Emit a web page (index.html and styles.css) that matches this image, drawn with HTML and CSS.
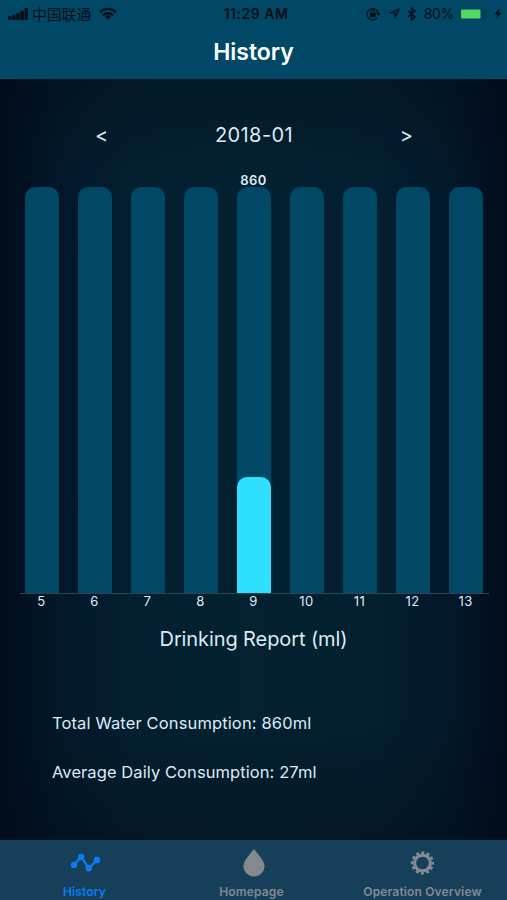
FILE: index.html
```html
<!DOCTYPE html>
<html lang="en">
<head>
    <meta charset="UTF-8">
    <meta name="viewport" content="width=device-width, initial-scale=1.0">
    <title>History</title>
    <link rel="stylesheet" href="styles.css">
</head>
<body>
    <header class="header">
        <div class="status">
            <div class="status-left">
                <svg class="signal" width="20" height="12" viewBox="0 0 20 12">
                    <rect x="0" y="8" width="3.4" height="4" rx="1"/>
                    <rect x="4.1" y="6.5" width="3.4" height="5.5" rx="1"/>
                    <rect x="8.2" y="4.8" width="3.4" height="7.2" rx="1"/>
                    <rect x="12.4" y="2.8" width="3.4" height="9.2" rx="1"/>
                    <rect x="16.5" y="0" width="3.4" height="12" rx="1"/>
                </svg>
                <span class="carrier">中国联通</span>
                <svg class="wifi" width="18" height="13" viewBox="0 0 18 13">
                    <path d="M1 5.2C5.3.8 12.7.8 17 5.2M4 8.2c2.8-2.8 7.2-2.8 10 0" fill="none" stroke="#020d16" stroke-width="2.3"/>
                    <path d="M9 12.5l-3-3.1c1.7-1.5 4.3-1.5 6 0z"/>
                </svg>
            </div>
            <span class="time">11:29 AM</span>
            <div class="status-right">
                <svg class="lock" width="15" height="14" viewBox="0 0 15 14">
                    <path d="M11.2 10.8A5.7 5.7 0 1 1 12.3 6.5" fill="none" stroke="#020d16" stroke-width="1.2"/>
                    <path d="M10 6h4.600l-2.300 3z"/>
                    <rect x="3.8" y="6" width="5.8" height="4.2" rx=".4"/>
                    <path d="M5 6.2V5a1.700 1.700 0 0 1 3.400 0v1.200" fill="none" stroke="#020d16"/>
                </svg>
                <svg class="arrow" width="11" height="11" viewBox="0 0 11 11">
                    <path d="M10 1L1 5h4.900v5z" fill="none" stroke="#020d16" stroke-width="1.2" stroke-linejoin="round"/>
                </svg>
                <svg class="bluetooth" width="9" height="14" viewBox="0 0 9 14">
                    <path d="M1 4l7 6-3.500 3V1L8 4l-7 6" fill="none" stroke="#020d16" stroke-width="1.4"/>
                </svg>
                <span class="percent">80%</span>
                <svg class="battery" width="31" height="12" viewBox="0 0 31 12">
                    <rect x=".5" y=".5" width="27" height="11" rx="2.5" fill="#01415f" stroke="#063e5e"/>
                    <rect x="2" y="1.5" width="19.5" height="9" rx="1" fill="#4cdb64"/>
                    <path d="M29 4c1.500.8 1.500 3.200 0 4z" fill="#063e5e"/>
                </svg>
                <svg class="bolt" width="8" height="11" viewBox="0 0 8 11">
                    <path d="M5.600 0L.5 6.200h2.800L2.300 11 7.700 4.500H4.700z"/>
                </svg>
            </div>
        </div>
        <h1 class="title">History</h1>
    </header>

    <main class="main">
        <div class="month">
            <span class="month-btn">&lt;</span>
            <span class="month-name">2018-01</span>
            <span class="month-btn">&gt;</span>
        </div>

        <div class="chart">
            <div class="col"><div class="bar"></div></div>
            <div class="col"><div class="bar"></div></div>
            <div class="col"><div class="bar"></div></div>
            <div class="col"><div class="bar"></div></div>
            <div class="col">
                <span class="value">860</span>
                <div class="bar"><div class="fill" style="height: 28.6%;"></div></div>
            </div>
            <div class="col"><div class="bar"></div></div>
            <div class="col"><div class="bar"></div></div>
            <div class="col"><div class="bar"></div></div>
            <div class="col"><div class="bar"></div></div>
        </div>
        <div class="axis"></div>
        <div class="days">
            <span>5</span>
            <span>6</span>
            <span>7</span>
            <span>8</span>
            <span>9</span>
            <span>10</span>
            <span>11</span>
            <span>12</span>
            <span>13</span>
        </div>

        <h2 class="report">Drinking Report (ml)</h2>

        <div class="totals">
            <p class="total">Total Water Consumption: 860ml</p>
            <p class="average">Average Daily Consumption: 27ml</p>
        </div>
    </main>

    <nav class="tabs">
        <div class="tab active">
            <svg width="32" height="30" viewBox="0 0 32 30">
                <path d="M5 17L12.200 8.700 19.800 20.500 28 12" fill="none" stroke="currentColor" stroke-width="2.2"/>
                <circle cx="5" cy="17" r="3.200"/>
                <circle cx="12.200" cy="8.900" r="3.200"/>
                <circle cx="19.800" cy="20.300" r="3.200"/>
                <circle cx="28" cy="12" r="3.200"/>
            </svg>
            <span>History</span>
        </div>
        <div class="tab home">
            <svg width="32" height="30" viewBox="0 0 32 30">
                <path d="M16 1c2.500 3.600 10.600 11 10.600 17.300a10.600 10.300 0 0 1-21.200 0C5.400 12 13.500 4.600 16 1z"/>
            </svg>
            <span>Homepage</span>
        </div>
        <div class="tab">
            <svg width="32" height="30" viewBox="0 0 32 30">
                <circle cx="15.500" cy="15" r="7.900" fill="none" stroke="currentColor" stroke-width="3.200"/>
                <circle cx="15.500" cy="15" r="10.200" fill="none" stroke="currentColor" stroke-width="2.800" stroke-dasharray="3 2.341" stroke-dashoffset="1.500"/>
            </svg>
            <span>Operation Overview</span>
        </div>
    </nav>
</body>
</html>
```
FILE: styles.css
```css
* {
    box-sizing: border-box;
}
body {
    margin: 0;
    height: 900px;
    display: flex;
    flex-direction: column;
    overflow: hidden;
    font-family: Inter, "Noto Sans CJK SC", sans-serif;
    color: #dcebf5;
    background: #021f2f;
}
svg {
    display: block;
    flex: none;
    fill: currentColor;
}
h1, h2, p {
    margin: 0;
    font-weight: 400;
}
span {
    white-space: nowrap;
}
.header {
    height: 79px;
    background: #004865;
}
.status {
    display: grid;
    grid-template-columns: 1fr auto 1fr;
    align-items: center;
    height: 27px;
    padding: 0 5px 0 8px;
    color: #020d16;
    font-size: 14px;
}
.status-left, .status-right {
    display: flex;
    align-items: center;
}
.status-right {
    justify-content: flex-end;
}
.carrier {
    margin: 0 8px 0 4px;
    font-family: "Noto Sans CJK SC", sans-serif;
    font-size: 14.8px;
    line-height: 20px;
}
.time {
    padding-left: 2px;
    font-weight: 600;
    letter-spacing: 0.5px;
}
.lock {
    margin-right: 8px;
}
.arrow {
    margin-right: 7px;
}
.bluetooth {
    margin-right: 8px;
}
.percent {
    letter-spacing: -0.3px;
}
.battery {
    margin: 0 4px 0 5px;
}
.title {
    text-align: center;
    font-size: 23px;
    line-height: 51px;
    font-weight: 600;
    color: #fff;
}
.main {
    flex: 1;
    background:
        linear-gradient(to bottom, rgba(1, 10, 24, 0.35), transparent 12%, transparent 84%, rgba(1, 10, 24, 0.4)),
        linear-gradient(to right, #010d1d, #02182a 12%, #031f30 26%, #032131 50%, #031f30 74%, #02182a 88%, #010d1d);
}
.month {
    display: flex;
    justify-content: space-between;
    align-items: center;
    height: 108px;
    padding: 3px 94px 0 95px;
    font-size: 20px;
    line-height: 24px;
}
.month-name {
    letter-spacing: 0.4px;
}
.chart {
    display: flex;
    height: 406px;
    padding: 0 15px;
}
.col {
    position: relative;
    flex: 1;
    display: flex;
    justify-content: center;
}
.bar {
    display: flex;
    align-items: flex-end;
    width: 34px;
    height: 100%;
    border-radius: 10px 10px 0 0;
    background: #004865;
}
.fill {
    width: 100%;
    border-radius: 10px 10px 0 0;
    background: #2edfff;
}
.value {
    position: absolute;
    top: -15px;
    font-size: 13px;
    line-height: 16px;
    font-weight: 600;
    letter-spacing: 0.5px;
}
.axis {
    height: 1px;
    margin: 0 18px 0 20px;
    background: #2b4658;
}
.days {
    display: flex;
    padding: 0 15px;
    font-size: 13px;
    line-height: 15px;
    letter-spacing: 0.4px;
}
.days span {
    flex: 1;
    text-align: center;
}
.report {
    margin-top: 17px;
    text-align: center;
    font-size: 20px;
    line-height: 26px;
    letter-spacing: -0.1px;
}
.totals {
    padding: 61px 52px 0;
    font-size: 16.5px;
    line-height: 20px;
}
.total {
    letter-spacing: 0.13px;
}
.average {
    margin-top: 29px;
    letter-spacing: 0.08px;
}
.tabs {
    display: flex;
    height: 60px;
    background: #164059;
    color: #83898f;
    font-size: 12px;
    font-weight: 600;
}
.tab {
    flex: 1;
    display: flex;
    flex-direction: column;
    align-items: center;
    padding-top: 8px;
}
.tab span {
    margin-top: 6px;
    line-height: 15px;
    letter-spacing: 0.15px;
}
.home span {
    padding-right: 4px;
}
.tab.active {
    color: #0b7cf5;
}
```
